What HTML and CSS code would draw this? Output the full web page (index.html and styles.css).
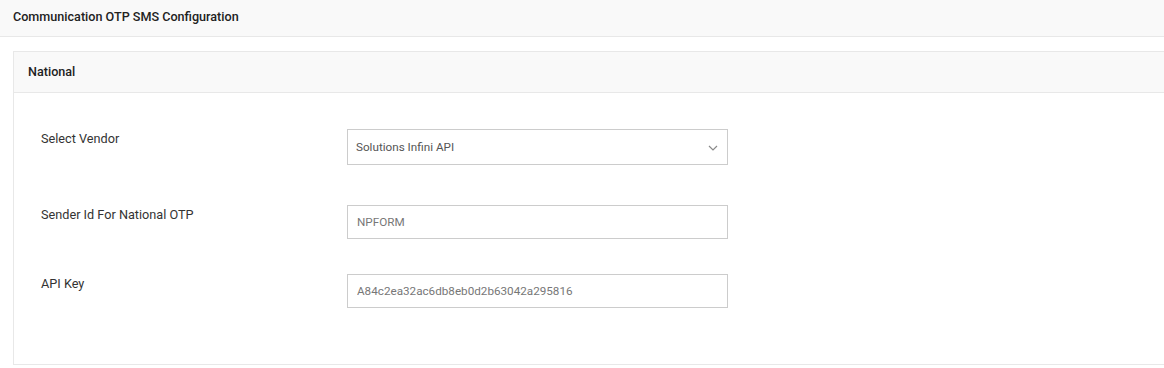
FILE: index.html
```html
<!DOCTYPE html>
<html lang="en">
<head>
	<meta charset="UTF-8">
	<title>Communication OTP SMS Configuration</title>
	<link rel="stylesheet" href="styles.css">
</head>
<body>
	<div class="page">
		<div class="page-head">Communication OTP SMS Configuration</div>

		<div class="card">
			<div class="card-head">National</div>
			<form class="card-body" action="" method="get">
				<div class="form-row form-row-select">
					<label class="form-label">Select Vendor</label>
					<div class="select-box">
						<span>Solutions Infini API</span>
						<svg class="chevron" width="10" height="6" viewBox="0 0 10 6">
							<path d="M1 1 L5 5 L9 1" fill="none" stroke="#8a8a8a" stroke-width="1.2"/>
						</svg>
					</div>
				</div>
				<div class="form-row">
					<label class="form-label">Sender Id For National OTP</label>
					<input type="text" class="text-box" value="NPFORM">
				</div>
				<div class="form-row">
					<label class="form-label">API Key</label>
					<input type="text" class="text-box" value="A84c2ea32ac6db8eb0d2b63042a295816">
				</div>
			</form>
		</div>
	</div>
</body>
</html>
```
FILE: styles.css
```css
* {
	margin: 0;
	padding: 0;
	box-sizing: border-box;
}

body {
	background: #fff;
	font-family: Roboto, "Liberation Sans", sans-serif;
	color: #333;
	overflow: hidden;
}

.page {
	overflow: hidden;
}

.page-head {
	height: 37px;
	padding: 0 13px;
	line-height: 34px;
	font-size: 12.6px;
	font-weight: 500;
	color: #222;
	background: #f9f9f9;
	border-bottom: 1px solid #e8e8e8;
}

.card {
	margin: 14px -4px 0 13px;
	border: 1px solid #e8e8e8;
	border-right: none;
	background: #fff;
}

.card-head {
	height: 41px;
	padding-left: 14px;
	line-height: 40px;
	font-size: 12.6px;
	font-weight: 500;
	color: #222;
	background: #f9f9f9;
	border-bottom: 1px solid #e8e8e8;
}

.card-body {
	padding: 36px 0 56px 27px;
}

.form-row {
	display: flex;
	align-items: flex-start;
	margin-bottom: 35px;
}

.form-row:last-child {
	margin-bottom: 0;
}

.form-row-select {
	margin-bottom: 40px;
}

.form-label {
	width: 306px;
	padding-top: 2px;
	font-size: 12.7px;
	color: #333;
}

.select-box {
	width: 381px;
	height: 36px;
	padding: 0 9px 0 8px;
	display: flex;
	align-items: center;
	justify-content: space-between;
	border: 1px solid #ccc;
	font-size: 11.7px;
	color: #555;
}

.chevron {
	margin-top: 2px;
}

.text-box {
	width: 381px;
	height: 34px;
	padding: 0 9px;
	border: 1px solid #ccc;
	font-family: Roboto, "Liberation Sans", sans-serif;
	font-size: 11.7px;
	color: #777;
	outline: none;
}
```
